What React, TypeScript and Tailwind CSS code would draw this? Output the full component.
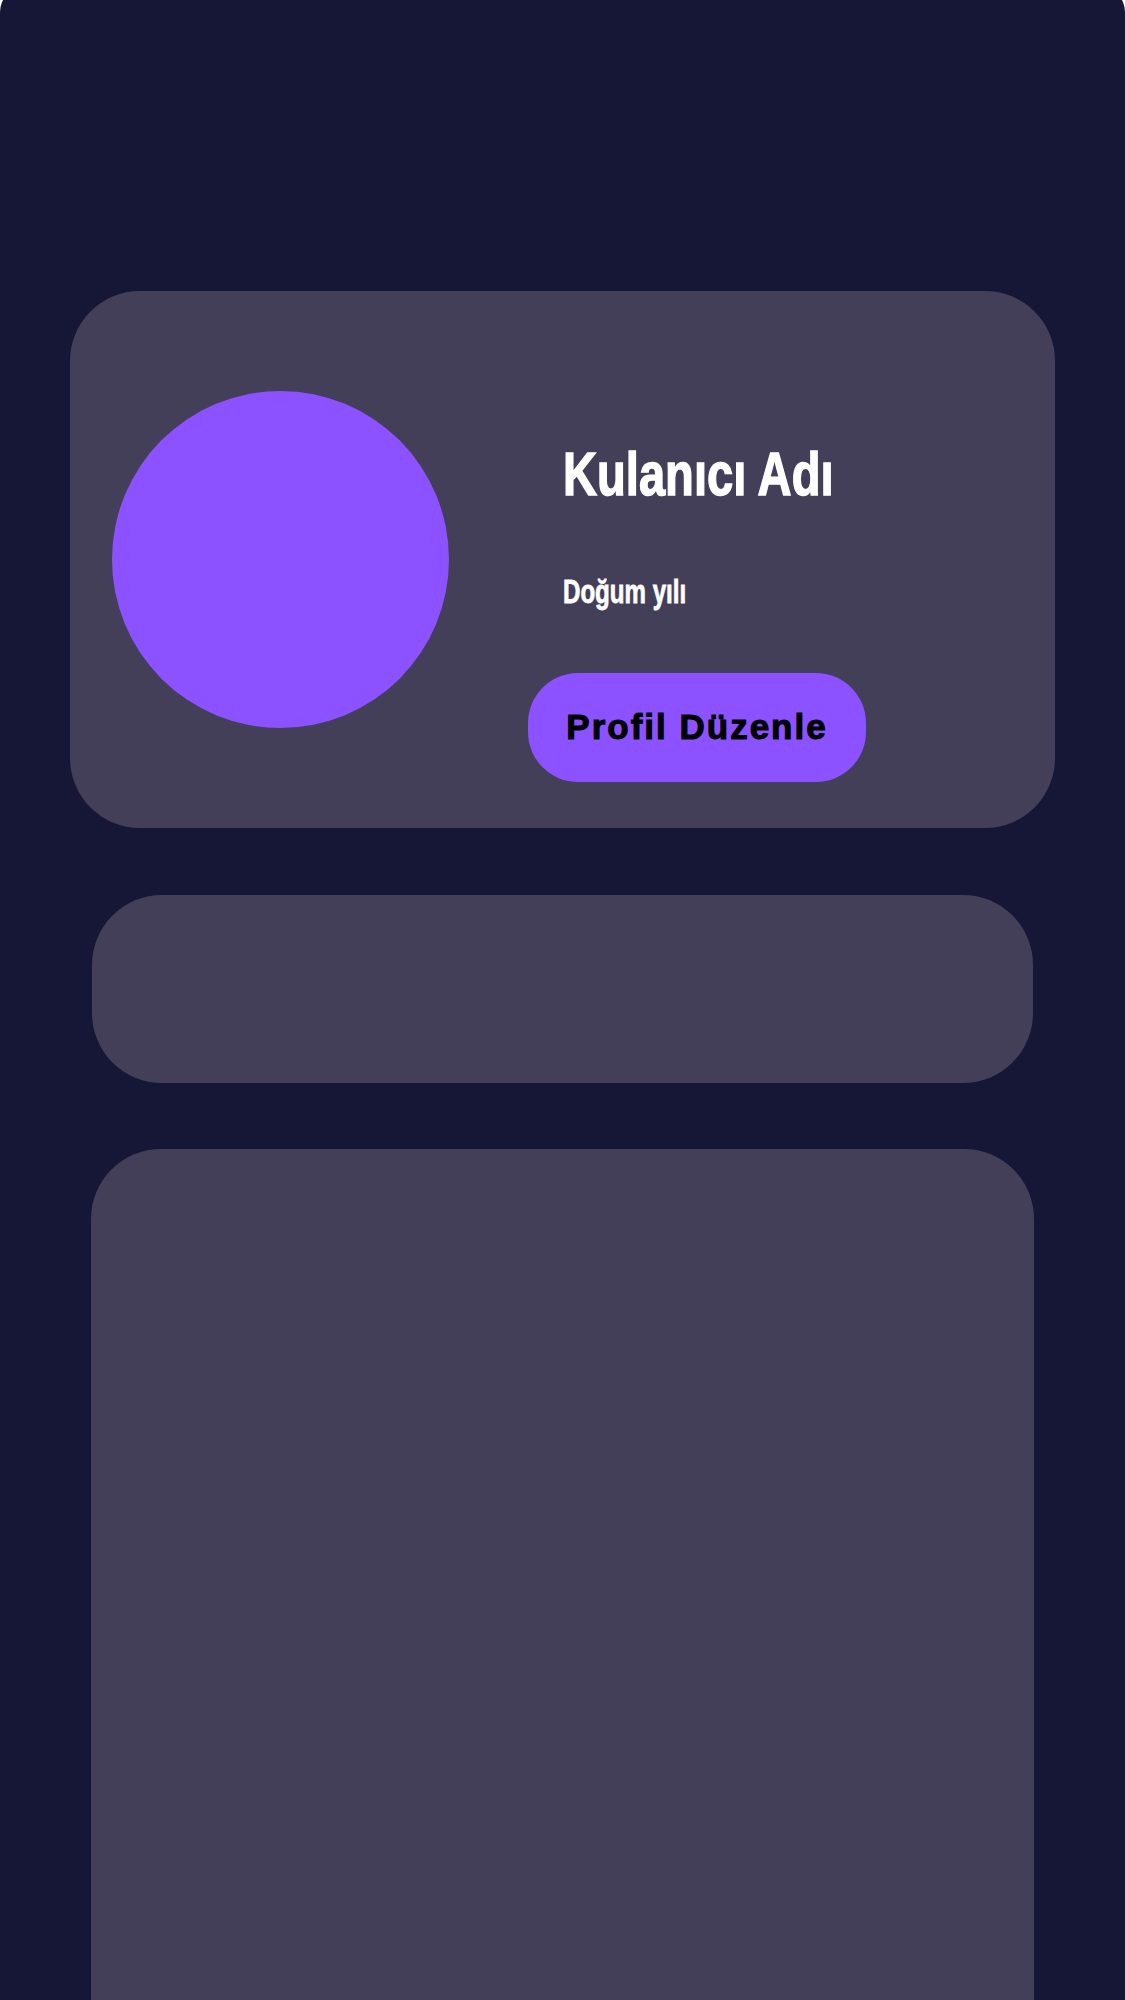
import React from "react";

export default function App() {
  return (
    <div className="w-[1125px] h-[2000px] overflow-hidden bg-white">
      <div className="-mt-[13px] h-[2100px] rounded-t-[25px] bg-[#161736] overflow-hidden pt-[304px] px-[70px] flex flex-col">
        <div className="h-[537px] shrink-0 rounded-[70px] bg-[#433f58] flex pl-[42px]">
          <div className="self-center w-[337px] h-[337px] rounded-full bg-[#8c52ff] shrink-0" />
          <div className="ml-[79px] pt-[152px] flex flex-col items-start">
            <div
              className="ml-[35px] text-white font-bold text-[62px] leading-none whitespace-nowrap origin-left scale-x-[0.76] [-webkit-text-stroke:1.5px_white]"
              style={{ fontFamily: '"Liberation Sans", Arial, sans-serif' }}
            >
              Kulanıcı Adı
            </div>
            <div
              className="mt-[70px] ml-[35px] text-white font-bold text-[33px] leading-none whitespace-nowrap origin-left scale-x-[0.73] [-webkit-text-stroke:0.8px_white]"
              style={{ fontFamily: '"Liberation Sans", Arial, sans-serif' }}
            >
              Doğum yılı
            </div>
            <button
              className="mt-[65px] w-[338px] h-[109px] shrink-0 rounded-[50px] bg-[#8c52ff] text-black font-bold text-[35px] tracking-[2px] flex items-center justify-center [-webkit-text-stroke:1px_black]"
              style={{ fontFamily: '"Liberation Sans", Arial, sans-serif' }}
            >
              Profil Düzenle
            </button>
          </div>
        </div>
        <div className="mt-[67px] mx-[22px] h-[188px] shrink-0 rounded-[70px] bg-[#433f58]" />
        <div className="mt-[66px] mx-[21px] h-[900px] shrink-0 rounded-t-[70px] bg-[#433f58]" />
      </div>
    </div>
  );
}
